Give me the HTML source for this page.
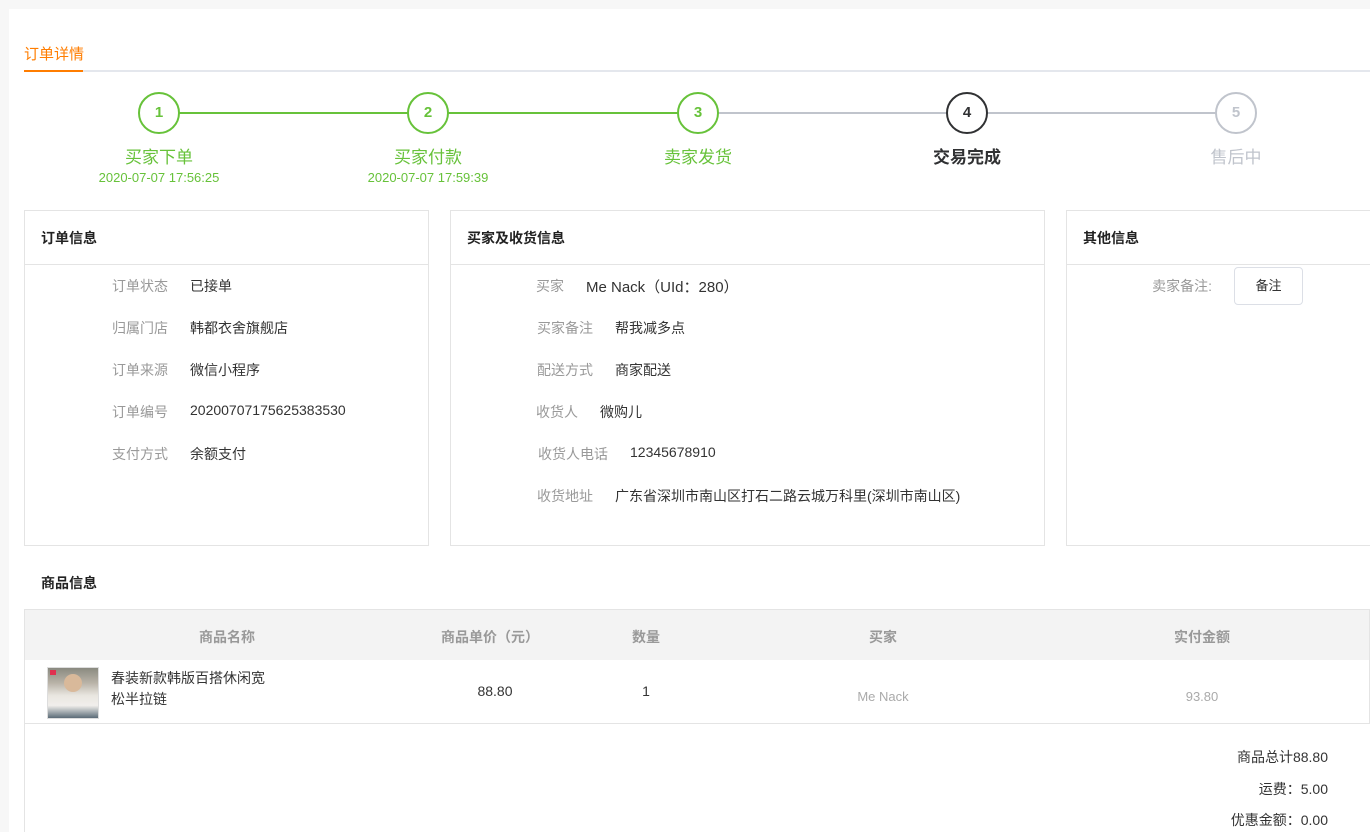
<!DOCTYPE html>
<html><head><meta charset="utf-8"><style>
*{margin:0;padding:0;box-sizing:border-box}
body{width:1370px;height:832px;overflow:hidden;background:#f7f7f7;font-family:"Liberation Sans","Noto Sans CJK SC",sans-serif;font-size:14px;color:#333;position:relative}
.a{position:absolute}
.main{left:9px;top:9px;width:1361px;height:823px;background:#fff}
.circ{width:42px;height:42px;border-radius:50%;border:2px solid #67c23a;background:#fff;color:#67c23a;font-weight:bold;font-size:15px;text-align:center;line-height:38px}
.lbl{width:200px;text-align:center;font-size:17px;color:#67c23a}
.tm{width:200px;text-align:center;font-size:13px;color:#67c23a}
.card{border:1px solid #e4e4e4;background:#fff}
.ch{height:54px;border-bottom:1px solid #e4e4e4;font-weight:bold;font-size:14px;line-height:54px;padding-left:16px;color:#222}
.k{color:#999;font-size:14px;text-align:right}
.v{color:#333;font-size:14px}
.th{color:#999;font-weight:bold;font-size:14px;text-align:center}
</style></head><body>
<div class="a main"></div>
<div class="a" style="left:24px;top:43px;font-size:15px;color:#ff7d00">订单详情</div>
<div class="a" style="left:24px;top:70px;width:1346px;height:2px;background:#e4e7ed"></div>
<div class="a" style="left:24px;top:70px;width:59px;height:2px;background:#ff7d00"></div>

<div class="a" style="left:159px;top:112px;width:539px;height:2px;background:#67c23a"></div>
<div class="a" style="left:698px;top:112px;width:538px;height:2px;background:#c0c4cc"></div>
<div class="a circ" style="left:138px;top:92px">1</div>
<div class="a circ" style="left:407px;top:92px">2</div>
<div class="a circ" style="left:677px;top:92px">3</div>
<div class="a circ" style="left:946px;top:92px;border-color:#303133;color:#303133">4</div>
<div class="a circ" style="left:1215px;top:92px;border-color:#c0c4cc;color:#c0c4cc">5</div>
<div class="a lbl" style="left:59px;top:143px">买家下单</div>
<div class="a lbl" style="left:328px;top:143px">买家付款</div>
<div class="a lbl" style="left:598px;top:143px">卖家发货</div>
<div class="a lbl" style="left:867px;top:143px;color:#303133;font-weight:bold">交易完成</div>
<div class="a lbl" style="left:1136px;top:143px;color:#c0c4cc">售后中</div>
<div class="a tm" style="left:59px;top:170px">2020-07-07 17:56:25</div>
<div class="a tm" style="left:328px;top:170px">2020-07-07 17:59:39</div>

<div class="a card" style="left:24px;top:210px;width:405px;height:336px"><div class="ch">订单信息</div></div>
<div class="a k" style="left:58px;top:276px;width:110px">订单状态</div><div class="a v" style="left:190px;top:276px">已接单</div>
<div class="a k" style="left:58px;top:318px;width:110px">归属门店</div><div class="a v" style="left:190px;top:318px">韩都衣舍旗舰店</div>
<div class="a k" style="left:58px;top:360px;width:110px">订单来源</div><div class="a v" style="left:190px;top:360px">微信小程序</div>
<div class="a k" style="left:58px;top:402px;width:110px">订单编号</div><div class="a v" style="left:190px;top:402px">20200707175625383530</div>
<div class="a k" style="left:58px;top:444px;width:110px">支付方式</div><div class="a v" style="left:190px;top:444px">余额支付</div>

<div class="a card" style="left:450px;top:210px;width:595px;height:336px"><div class="ch">买家及收货信息</div></div>
<div class="a k" style="left:498px;top:276px;width:66px">买家</div><div class="a v" style="left:586px;top:276px;font-size:15px">Me Nack（UId：280）</div>
<div class="a k" style="left:498px;top:318px;width:95px">买家备注</div><div class="a v" style="left:615px;top:318px">帮我减多点</div>
<div class="a k" style="left:498px;top:360px;width:95px">配送方式</div><div class="a v" style="left:615px;top:360px">商家配送</div>
<div class="a k" style="left:498px;top:402px;width:80px">收货人</div><div class="a v" style="left:600px;top:402px">微购儿</div>
<div class="a k" style="left:498px;top:444px;width:110px">收货人电话</div><div class="a v" style="left:630px;top:444px">12345678910</div>
<div class="a k" style="left:498px;top:486px;width:95px">收货地址</div><div class="a v" style="left:615px;top:486px">广东省深圳市南山区打石二路云城万科里(深圳市南山区)</div>

<div class="a card" style="left:1066px;top:210px;width:320px;height:336px"><div class="ch">其他信息</div></div>
<div class="a k" style="left:1118px;top:276px;width:94px">卖家备注:</div>
<div class="a" style="left:1234px;top:267px;width:69px;height:38px;border:1px solid #dcdfe6;border-radius:4px;font-size:13px;text-align:center;line-height:36px;color:#333">备注</div>

<div class="a" style="left:41px;top:573px;font-weight:bold;color:#222">商品信息</div>
<div class="a" style="left:24px;top:609px;width:1346px;height:115px;border:1px solid #e4e4e4"></div>
<div class="a" style="left:25px;top:610px;width:1344px;height:50px;background:#f3f3f3"></div>
<div class="a" style="left:24px;top:723px;width:1px;height:109px;background:#e4e4e4"></div>
<div class="a th" style="left:142px;top:627px;width:170px">商品名称</div>
<div class="a th" style="left:405px;top:627px;width:170px">商品单价（元）</div>
<div class="a th" style="left:561px;top:627px;width:170px">数量</div>
<div class="a th" style="left:798px;top:627px;width:170px">买家</div>
<div class="a th" style="left:1117px;top:627px;width:170px">实付金额</div>
<div class="a" style="left:47px;top:667px;width:52px;height:52px;border:1px solid #ddd;background:linear-gradient(180deg,#8a8a80 0%,#b9b3a8 30%,#e9e6e0 55%,#f1efec 75%,#5b6b77 100%)"><div class="a" style="left:16px;top:6px;width:18px;height:18px;border-radius:50%;background:#d9b99a"></div><div class="a" style="left:2px;top:2px;width:6px;height:5px;background:#e03050"></div></div>
<div class="a v" style="left:111px;top:668px;line-height:21px">春装新款韩版百搭休闲宽<br>松半拉链</div>
<div class="a v" style="left:405px;top:683px;width:180px;text-align:center">88.80</div>
<div class="a v" style="left:561px;top:683px;width:170px;text-align:center">1</div>
<div class="a" style="left:798px;top:689px;width:170px;text-align:center;font-size:13px;color:#aaa">Me Nack</div>
<div class="a" style="left:1117px;top:689px;width:170px;text-align:center;font-size:13px;color:#aaa">93.80</div>
<div class="a v" style="left:1100px;top:747px;width:228px;text-align:right">商品总计88.80</div>
<div class="a v" style="left:1100px;top:779px;width:228px;text-align:right">运费：5.00</div>
<div class="a v" style="left:1100px;top:810px;width:228px;text-align:right">优惠金额：0.00</div>
</body></html>
